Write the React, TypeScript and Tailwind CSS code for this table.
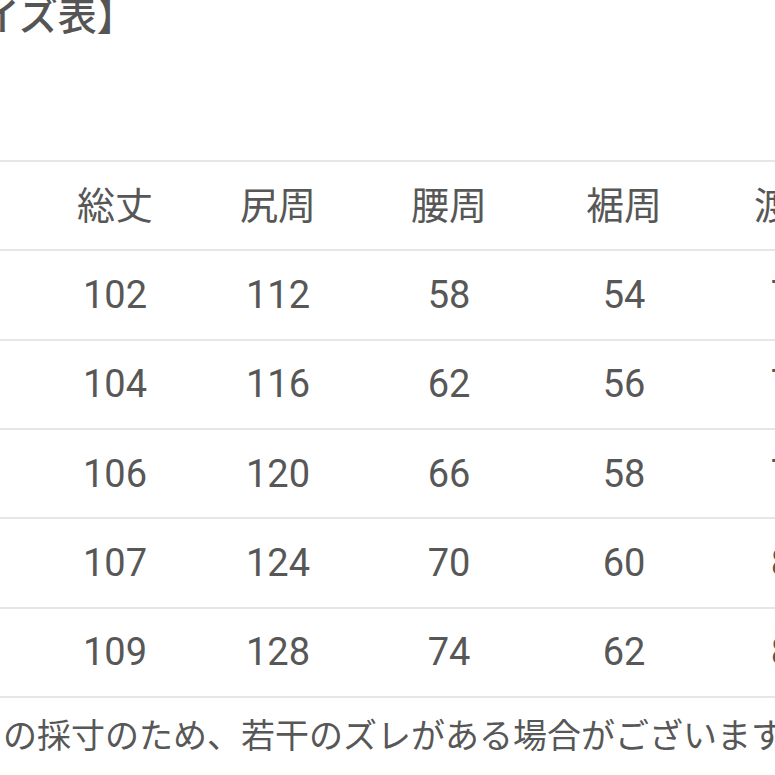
import React from "react";

const header = ["総丈", "尻周", "腰周", "裾周", "渡り"];
const rows = [
  ["102", "112", "58", "54", "72"],
  ["104", "116", "62", "56", "74"],
  ["106", "120", "66", "58", "76"],
  ["107", "124", "70", "60", "80"],
  ["109", "128", "74", "62", "82"],
];

function Row({ cells, first }: { cells: string[]; first?: boolean }) {
  return (
    <div
      className={
        "grid grid-cols-[33px_164px_162px_180px_170px_166px] items-center border-b-[2px] border-[#e6e6e6] " +
        (first ? "border-t-[2px] h-[91.33px]" : "h-[89.33px]")
      }
    >
      <div />
      {cells.map((c, i) => (
        <div key={i} className="text-center whitespace-nowrap">
          {c}
        </div>
      ))}
    </div>
  );
}

export default function App() {
  return (
    <div className="w-[775px] h-[775px] overflow-hidden bg-white text-[#575757] font-['Roboto','Noto_Sans_CJK_JP',sans-serif]">
      <div className="ml-[-58px] text-[39px] leading-[34px] font-medium whitespace-nowrap text-[#555]">
        サイズ表】
      </div>
      <div className="mt-[126px] w-[900px] text-[38px] leading-none">
        <Row cells={header} first />
        {rows.map((r, i) => (
          <Row key={i} cells={r} />
        ))}
      </div>
      <div className="ml-[3px] mt-[18px] text-[34px] leading-[40px] whitespace-nowrap">
        の採寸のため、若干のズレがある場合がございます。
      </div>
    </div>
  );
}
